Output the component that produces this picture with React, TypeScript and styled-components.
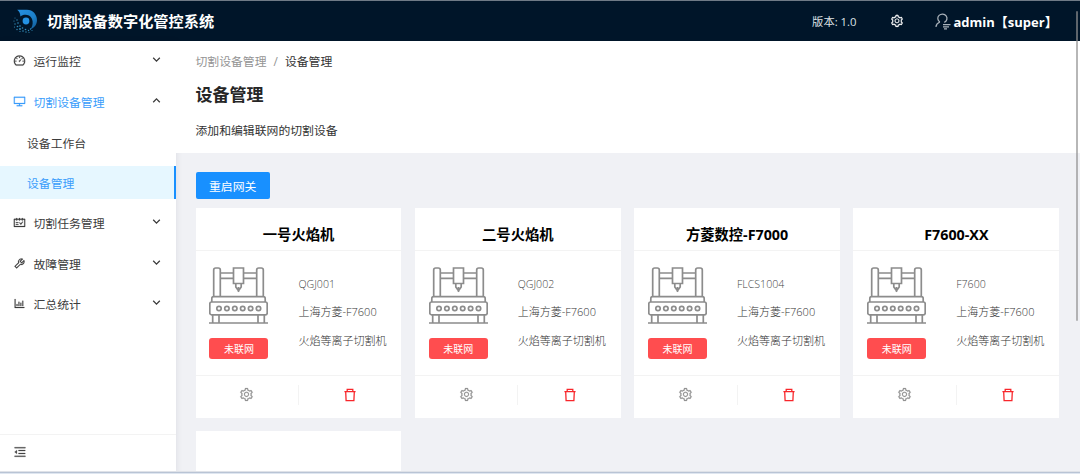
import React from 'react';
import styled, { createGlobalStyle } from 'styled-components';
import {
  AiOutlineBarChart,
  AiOutlineDashboard,
  AiOutlineDesktop,
  AiOutlineMenuFold,
  AiOutlineSchedule,
  AiOutlineSetting,
  AiOutlineTool,
} from 'react-icons/ai';

const GlobalStyle = createGlobalStyle`
  * { box-sizing: border-box; }
  body {
    margin: 0;
    overflow: hidden;
    font-family: "Open Sans", "Noto Sans CJK SC", sans-serif;
    font-size: 11.85px;
    color: #333;
  }
  svg { display: block; flex: none; }
`;

const Page = styled.div`
  position: relative;
  display: flex;
  flex-direction: column;
  height: 474px;
  overflow: hidden;
  border-top: 1px solid #6f7a86;
  background: #f0f1f5;
`;

const Header = styled.header`
  display: flex;
  align-items: center;
  flex: none;
  height: 40px;
  padding: 0 27.5px 0 12px;
  background: #001529;
  color: #fff;
  white-space: nowrap;
`;

const Brand = styled.h1`
  flex: 1;
  margin: 0 0 0 9px;
  font-size: 15.2px;
  font-weight: 700;
  line-height: 22px;
`;

const Version = styled.span`
  margin-right: 33px;
  font-size: 11.3px;
  color: #dde1e5;
`;

const UserIcon = styled.span`
  margin: 0 3px 0 31px;
  color: #a9b2ba;
`;

const UserName = styled.span`
  width: 99px;
  font-size: 13px;
  font-weight: 700;
`;

const Body = styled.div`
  display: flex;
  flex: 1;
  min-height: 0;
`;

const Sidebar = styled.aside`
  display: flex;
  flex-direction: column;
  flex: none;
  width: 175.5px;
  background: #fff;
  box-shadow: 1px 0 6px rgba(0, 21, 41, 0.07);
`;

const Menu = styled.nav`
  display: flex;
  flex-direction: column;
  flex: 1;
  gap: 7px;
  padding-top: 3.3px;
`;

const MenuItem = styled.div<{ $active?: boolean }>`
  display: flex;
  align-items: center;
  height: 33.5px;
  padding: 0 14.5px 1px 12.5px;
  color: ${(p) => (p.$active ? '#3a9dfb' : '#3c3c3c')};

  svg {
    stroke-width: 16px;
  }
`;

const MenuLabel = styled.span`
  flex: 1;
  margin-left: 8px;
`;

const Arrow = styled.span`
  margin-top: -2px;
  color: #3c3c3c;

  svg {
    stroke-width: 1.3px;
  }
`;

const SubItem = styled.div<{ $selected?: boolean }>`
  display: flex;
  align-items: center;
  height: 33.5px;
  padding-left: 27px;
  border-right: 2px solid ${(p) => (p.$selected ? '#1890ff' : 'transparent')};
  background: ${(p) => (p.$selected ? '#e6f7ff' : 'transparent')};
  color: ${(p) => (p.$selected ? '#3a9dfb' : '#3c3c3c')};
`;

const Collapse = styled.div`
  display: flex;
  align-items: center;
  height: 40px;
  padding: 0 0 6px 13px;
  border-top: 1px solid #f3f3f3;
  color: #444;

  svg {
    stroke-width: 16px;
  }
`;

const Main = styled.main`
  flex: 1;
  min-width: 0;
`;

const PageHeader = styled.section`
  height: 111.6px;
  padding: 11px 20px 0;
  background: #fff;
`;

const Breadcrumb = styled.div`
  display: flex;
  gap: 7px;
  line-height: 19px;
  color: #949494;
`;

const Current = styled.span`
  color: #333;
`;

const Title = styled.h2`
  margin: 9.5px 0 0;
  font-size: 17px;
  font-weight: 700;
  line-height: 27px;
  color: #262626;
`;

const Description = styled.p`
  margin: 12.5px 0 0;
  line-height: 20px;
`;

const Content = styled.section`
  padding: 19.6px 20.8px 0 20.2px;
`;

const RestartButton = styled.button`
  display: block;
  width: 74px;
  height: 27px;
  margin-bottom: 9px;
  padding: 1px 0 0;
  border: 0;
  border-radius: 2px;
  background: #1890ff;
  color: #fff;
  font: inherit;
  line-height: 26px;
`;

const Grid = styled.div`
  display: grid;
  grid-template-columns: repeat(4, 1fr);
  gap: 13.5px;
`;

const Card = styled.article`
  display: flex;
  flex-direction: column;
  height: 209.5px;
  background: #fff;
`;

const CardTitle = styled.h3`
  height: 42.6px;
  margin: 0;
  padding-top: 15.5px;
  border-bottom: 1px solid #f3f3f3;
  color: #000;
  font-size: 14.3px;
  font-weight: 700;
  line-height: 22px;
  text-align: center;
`;

const CardBody = styled.div`
  display: flex;
  flex: 1;
  padding: 16.2px 0 0 13.8px;
`;

const Picture = styled.div`
  display: flex;
  flex-direction: column;
  gap: 13px;
  width: 59px;
  margin-right: 30px;
`;

const Status = styled.span`
  height: 21px;
  border-radius: 3px;
  background: #ff4d4f;
  color: #fff;
  font-size: 10px;
  line-height: 22px;
  text-align: center;
`;

const Details = styled.div`
  display: flex;
  flex-direction: column;
  padding-top: 3px;
  font-size: 11px;
  font-weight: 300;
  line-height: 28.4px;
  color: #333;
  white-space: nowrap;
`;

const Code = styled.span`
  font-size: 10.6px;
  color: #444;
`;

const Actions = styled.div`
  display: flex;
  align-items: center;
  height: 43px;
  padding-bottom: 4px;
  border-top: 1px solid #f3f3f3;
`;

const Action = styled.div<{ $danger?: boolean }>`
  display: flex;
  flex: 1;
  align-items: center;
  justify-content: center;
  height: 20px;
  color: ${(p) => (p.$danger ? '#f8262b' : '#929292')};

  & + & {
    border-left: 1px solid #f3f3f3;
  }
`;

const ScrollThumb = styled.div`
  position: absolute;
  top: 10px;
  right: 2px;
  width: 2px;
  height: 310px;
  border-radius: 1px;
  background: rgba(145, 145, 145, 0.65);
`;

const BottomEdge = styled.div`
  position: absolute;
  right: 0;
  bottom: 0;
  left: 0;
  height: 3px;
  border-top: 1px solid #dfe2e8;
  border-bottom: 1px solid #dfe6f0;
  background: #b9c4d5;
`;

const logoDots = [
  [3, 9, 0.5], [2, 12, 0.6], [5, 11, 0.7], [3, 15, 0.7], [6, 14, 0.8],
  [2.5, 18, 0.6], [5.5, 17.5, 0.8], [8, 17, 0.8], [5, 20.5, 0.7],
  [8, 20, 0.9], [10.5, 19, 0.8], [8, 22.5, 0.6], [11, 22, 0.8],
  [13.5, 20.5, 0.8], [14, 23, 0.7], [16.5, 21.5, 0.7], [18.5, 20, 0.7],
  [17, 23.4, 0.5], [20, 21.5, 0.5],
];

const Logo = () => (
  <svg width="26" height="25" viewBox="0 0 26 25">
    <defs>
      <linearGradient id="ring" x1="0" y1="0" x2="1" y2="1">
        <stop offset="0" stopColor="#2590e2" />
        <stop offset="0.6" stopColor="#1c80ca" />
        <stop offset="1" stopColor="#11568f" />
      </linearGradient>
    </defs>
    <path
      d="M5.2 .8H15C20.8 .8 25 5.6 25 11.2C25 15.4 22.2 19.1 18.2 20.4C20 18.4 21 15.2 20.6 12.2C20 8.2 17.4 6 13.8 5.8C11.6 5.7 9.8 6.3 8.4 7.4Q8.2 3 5.2 .8Z"
      fill="url(#ring)"
    />
    <circle cx="14" cy="12" r="3.4" fill="#2492e4" />
    {logoDots.map(([x, y, r]) => (
      <circle key={`${x}-${y}`} cx={x} cy={y} r={r} fill="#3490bd" />
    ))}
  </svg>
);

const User = () => (
  <svg width="16" height="17" viewBox="0 0 16 17" fill="none" stroke="currentColor" strokeWidth="1.25">
    <path d="M4.9 9A4.6 4.3 0 1 1 9.3 9.3M4.9 9C2.6 9.9 1.2 11.6 .9 13.8" />
    <path d="M8 11.6H15.5M8 13.8H14M9 15.9H12" />
  </svg>
);

const Chevron = ({ up }: { up?: boolean }) => (
  <svg width="9" height="9" viewBox="0 0 9 9" fill="none" stroke="currentColor">
    <path d={up ? 'M1.2 6.2L4.5 2.9L7.8 6.2' : 'M1.2 2.8L4.5 6.1L7.8 2.8'} />
  </svg>
);

const Trash = () => (
  <svg width="14" height="14" viewBox="0 0 14 14" fill="none" stroke="currentColor" strokeWidth="1.3">
    <path d="M1.4 3.6H12.6M4.2 3.4V1.4H9.8V3.4M2.7 3.8L3.1 12.6H10.9L11.3 3.8" />
  </svg>
);

const Machine = () => (
  <svg width="59" height="58" viewBox="0 0 59 58" fill="none" stroke="#8c8c8c" strokeWidth="1.7">
    <path d="M4.7 29.5V3Q4.7 1 6.7 1H9.3Q11.3 1 11.3 3V29.5M47.7 29.5V3Q47.7 1 49.7 1H52.3Q54.3 1 54.3 3V29.5" />
    <path d="M11.3 6H24.5M11.3 11.3H24.5M34.5 6H47.7M34.5 11.3H47.7" />
    <path d="M24.5 1H34.5V16.5H24.5ZM26.8 16.5V20L29.5 23.8L32.2 20V16.5M29.5 20V25" />
    <path d="M2.8 35V31.5Q2.8 29.7 4.6 29.7H54.4Q56.2 29.7 56.2 31.5V35" />
    <rect x="0.8" y="35" width="57.4" height="12.8" rx="1.8" />
    {[10, 17.9, 25.8, 33.7, 41.6, 49.5].map((x) => (
      <circle key={x} cx={x} cy="41.5" r="2.2" />
    ))}
    <path d="M3.7 47.8V56M10 47.8V56M49 47.8V56M55.3 47.8V56M0 56H59" />
  </svg>
);

const devices = [
  { name: '一号火焰机', code: 'QGJ001' },
  { name: '二号火焰机', code: 'QGJ002' },
  { name: '方菱数控-F7000', code: 'FLCS1004' },
  { name: 'F7600-XX', code: 'F7600' },
];

const DeviceCard = ({ name, code }: { name: string; code: string }) => (
  <Card>
    <CardTitle>{name}</CardTitle>
    <CardBody>
      <Picture>
        <Machine />
        <Status>未联网</Status>
      </Picture>
      <Details>
        <Code>{code}</Code>
        <span>上海方菱-F7600</span>
        <span>火焰等离子切割机</span>
      </Details>
    </CardBody>
    <Actions>
      <Action><AiOutlineSetting size={15} strokeWidth={12} /></Action>
      <Action $danger><Trash /></Action>
    </Actions>
  </Card>
);

type GroupProps = { icon: React.ReactNode; label: string; open?: boolean };

const MenuGroup = ({ icon, label, open }: GroupProps) => (
  <MenuItem $active={open}>
    {icon}
    <MenuLabel>{label}</MenuLabel>
    <Arrow><Chevron up={open} /></Arrow>
  </MenuItem>
);

export default function App() {
  return (
    <Page>
      <GlobalStyle />
      <Header>
        <Logo />
        <Brand>切割设备数字化管控系统</Brand>
        <Version>版本: 1.0</Version>
        <AiOutlineSetting size={14} strokeWidth={12} />
        <UserIcon><User /></UserIcon>
        <UserName>admin【super】</UserName>
      </Header>
      <Body>
        <Sidebar>
          <Menu>
            <MenuGroup icon={<AiOutlineDashboard size={13} />} label="运行监控" />
            <MenuGroup icon={<AiOutlineDesktop size={13} />} label="切割设备管理" open />
            <SubItem>设备工作台</SubItem>
            <SubItem $selected>设备管理</SubItem>
            <MenuGroup icon={<AiOutlineSchedule size={13} />} label="切割任务管理" />
            <MenuGroup icon={<AiOutlineTool size={13} />} label="故障管理" />
            <MenuGroup icon={<AiOutlineBarChart size={13} />} label="汇总统计" />
          </Menu>
          <Collapse><AiOutlineMenuFold size={14} /></Collapse>
        </Sidebar>
        <Main>
          <PageHeader>
            <Breadcrumb>
              <span>切割设备管理</span>
              <span>/</span>
              <Current>设备管理</Current>
            </Breadcrumb>
            <Title>设备管理</Title>
            <Description>添加和编辑联网的切割设备</Description>
          </PageHeader>
          <Content>
            <RestartButton>重启网关</RestartButton>
            <Grid>
              {devices.map((device) => (
                <DeviceCard key={device.code} {...device} />
              ))}
              <Card />
            </Grid>
          </Content>
        </Main>
      </Body>
      <ScrollThumb />
      <BottomEdge />
    </Page>
  );
}
